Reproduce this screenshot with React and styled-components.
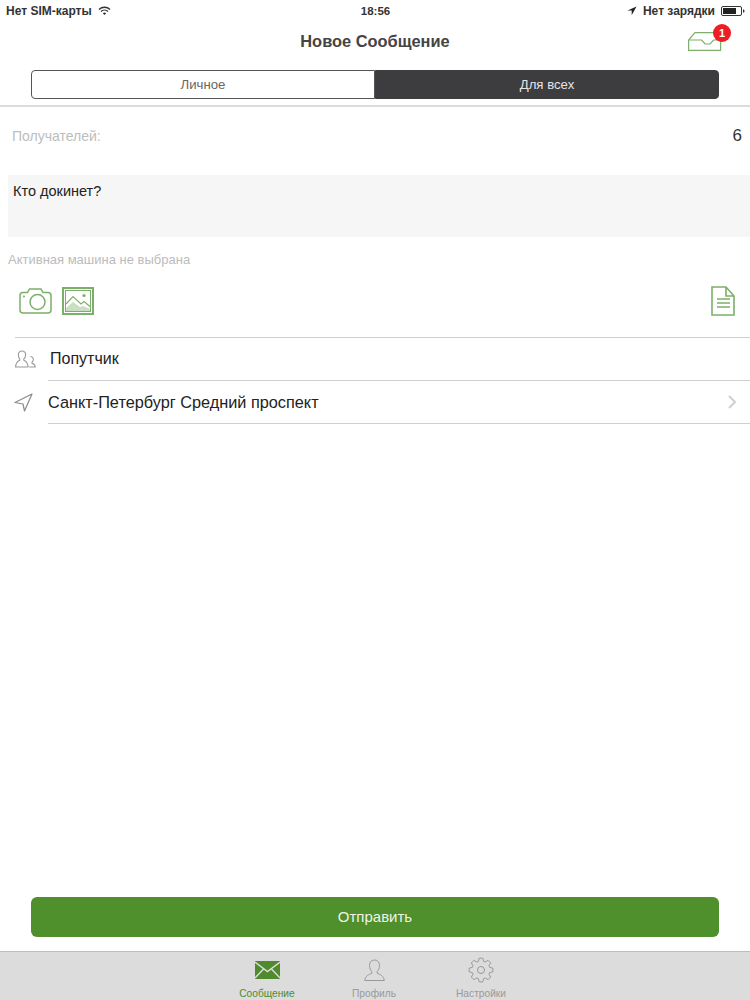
import styled, { createGlobalStyle } from "styled-components";

const Global = createGlobalStyle`
  html, body {
    margin: 0;
    padding: 0;
    background: #ffffff;
  }
  body {
    font-family: "Liberation Sans", Arial, sans-serif;
  }
`;

const Page = styled.div`
  width: 750px;
  height: 1000px;
  display: flex;
  flex-direction: column;
  overflow: hidden;
  background: #fff;
`;

const StatusBar = styled.div`
  height: 21px;
  padding: 0 5px 0 6px;
  display: grid;
  grid-template-columns: 1fr auto 1fr;
  align-items: center;
  font-size: 12px;
  font-weight: 700;
  color: #333;
`;

const StatusSide = styled.div`
  display: flex;
  align-items: center;
  gap: 6px;
  justify-content: ${(p) => (p.$right ? "flex-end" : "flex-start")};
`;

const Clock = styled.span`
  font-size: 11.5px;
`;

const Header = styled.div`
  position: relative;
  height: 42px;
  box-sizing: border-box;
  padding-bottom: 2px;
  display: flex;
  align-items: center;
  justify-content: center;
  font-size: 16.4px;
  font-weight: 700;
  color: #444;
`;

const InboxWrap = styled.div`
  position: absolute;
  left: 688px;
  top: 3px;
  width: 44px;
  height: 30px;
`;

const Badge = styled.div`
  position: absolute;
  left: 25px;
  top: 0;
  width: 18px;
  height: 18px;
  border-radius: 50%;
  background: #ee1c25;
  color: #fff;
  font-size: 11px;
  font-weight: 700;
  line-height: 18px;
  text-align: center;
`;

const Segments = styled.div`
  margin: 7px 31px 0;
  height: 29px;
  display: flex;
`;

const Segment = styled.div`
  flex: 1;
  display: flex;
  align-items: center;
  justify-content: center;
  box-sizing: border-box;
  font-size: 13.2px;
  color: ${(p) => (p.$active ? "#e4e4e4" : "#666")};
  background: ${(p) => (p.$active ? "#3d3c3e" : "#fff")};
  border: 1px solid ${(p) => (p.$active ? "#3d3c3e" : "#555")};
  border-radius: ${(p) => (p.$active ? "0 4px 4px 0" : "4px 0 0 4px")};
`;

const Rule = styled.div`
  height: 2px;
  margin-top: 6px;
  background: #dcdcdc;
`;

const Recipients = styled.div`
  height: 57px;
  padding: 0 8px 0 12px;
  display: flex;
  align-items: center;
  justify-content: space-between;
`;

const RecipientsLabel = styled.span`
  font-size: 14px;
  color: #bdbdbd;
`;

const RecipientsCount = styled.span`
  font-size: 17px;
  color: #333;
`;

const Message = styled.div`
  margin: 11px 0 0 8px;
  height: 62px;
  padding: 8px 5px;
  box-sizing: border-box;
  background: #f6f6f6;
  font-size: 14.5px;
  color: #222;
`;

const CarNote = styled.div`
  margin: 15px 0 0 8px;
  font-size: 13px;
  line-height: 15px;
  color: #bcbcbc;
`;

const Attachments = styled.div`
  height: 70px;
  box-sizing: border-box;
  padding: 0 15px 3px 19px;
  display: flex;
  align-items: center;
  gap: 10px;
`;

const Spacer = styled.div`
  flex: 1;
`;

const Row = styled.div`
  position: relative;
  height: ${(p) => (p.$last ? 44 : 43)}px;
  box-sizing: border-box;
  margin-left: ${(p) => p.$inset}px;
  padding-left: ${(p) => p.$pad}px;
  padding-right: 13px;
  display: flex;
  align-items: center;
  justify-content: space-between;
  border-top: 1px solid #cfcfcf;
  border-bottom: ${(p) => (p.$last ? "1px solid #cfcfcf" : "none")};
  font-size: ${(p) => p.$size}px;
  color: #222;
`;

const RowIcon = styled.div`
  position: absolute;
  left: ${(p) => p.$left}px;
  top: 12px;
  display: flex;
`;

const Main = styled.div`
  flex: 1;
  display: flex;
  flex-direction: column;
`;

const SendButton = styled.button`
  margin: 0 31px 14px;
  height: 40px;
  padding: 0 0 2px;
  border: none;
  border-radius: 6px;
  background: #4f8f2c;
  color: #eef4ea;
  font-family: inherit;
  font-size: 15px;
`;

const TabBar = styled.div`
  height: 49px;
  box-sizing: border-box;
  padding-right: 2px;
  border-top: 1px solid #bdbdbd;
  background: #dcdcdc;
  display: flex;
  justify-content: center;
  gap: 50px;
`;

const Tab = styled.div`
  width: 57px;
  display: flex;
  flex-direction: column;
  align-items: center;
  height: 48px;
  font-size: 10.2px;
  color: ${(p) => (p.$active ? "#4f8a2e" : "#9a9a9a")};
`;

const TabIcon = styled.div`
  height: 36px;
  display: flex;
  align-items: center;
`;

const TabLabel = styled.span`
  line-height: 12px;
  white-space: nowrap;
`;

const green = "#7cb06a";

const Wifi = () => (
  <svg width="13" height="10" viewBox="0 0 13 10">
    <path d="M1 3.5a8 8 0 0 1 11 0" fill="none" stroke="#333" strokeWidth="1.4" />
    <path d="M3 5.6a5 5 0 0 1 7 0" fill="none" stroke="#333" strokeWidth="1.4" />
    <path d="M4.8 7.2a2.5 2.5 0 0 1 3.4 0L6.5 9z" fill="#333" />
  </svg>
);

const Arrow = () => (
  <svg width="10" height="10" viewBox="0 0 10 10">
    <path d="M9.5.5 .5 4.6h4.2V9.2z" fill="#222" />
  </svg>
);

const Battery = () => (
  <svg width="24" height="10" viewBox="0 0 24 10">
    <rect x=".5" y=".5" width="20" height="9" rx="1.5" fill="none" stroke="#333" />
    <rect x="2" y="2" width="13" height="6" fill="#222" />
    <path d="M22 3.4c1 0 1.5.7 1.5 1.6s-.5 1.600-1.500 1.600z" fill="#333" />
  </svg>
);

const Inbox = () => (
  <svg width="34" height="19" viewBox="0 0 34 19" style={{ position: "absolute", left: 0, top: 8 }}>
    <path
      d="M.6 8 7 .6h26M.6 8v10.400h32V8M.6 8h13l3.500 4h5l3.500-4h7"
      fill="none"
      stroke={green}
      strokeWidth="1.2"
    />
  </svg>
);

const Camera = () => (
  <svg width="33" height="26" viewBox="0 0 33 26">
    <path
      d="M3.500 4.500h5l2-3.500h11.500l2 3.500h5a3 3 0 0 1 3 3V22a3 3 0 0 1-3 3H4a3 3 0 0 1-3-3V7a2.800 2.800 0 0 1 2.500-2.500z"
      fill="none"
      stroke={green}
      strokeWidth="1.5"
    />
    <circle cx="18.500" cy="14" r="7.500" fill="none" stroke={green} strokeWidth="1.5" />
    <circle cx="5" cy="8.500" r="1" fill={green} />
  </svg>
);

const Picture = () => (
  <svg width="32" height="28" viewBox="0 0 32 28">
    <rect x="1" y="1" width="30" height="26" fill="none" stroke={green} strokeWidth="2" />
    <rect x="3.500" y="3.500" width="25" height="21" fill="none" stroke={green} strokeWidth="1" />
    <path d="M4 17 11 9.500 19 17l3-2.500 6 5" fill="none" stroke={green} strokeWidth="1.100" />
    <path d="M4 24v-3l7-6 7 5 3-1 7 3v2z" fill="#c9dfc0" />
    <circle cx="22" cy="8.500" r="1.600" fill={green} />
  </svg>
);

const DocIcon = () => (
  <svg width="24" height="30" viewBox="0 0 24 30">
    <path d="M1 1h14l8 9v19H1zM15 1v9h8" fill="none" stroke={green} strokeWidth="1.600" />
    <path d="M6 13h13M6 17h13M6 21h13" stroke={green} strokeWidth="1.300" />
  </svg>
);

const People = () => (
  <svg width="21" height="18" viewBox="0 0 21 18">
    <g fill="none" stroke="#9a9a9a" strokeWidth="1.100">
      <path d="M7 1a3.600 3.600 0 0 1 3.600 4c0 1.800-.8 3.200-1.800 3.900v1.300c2.200.9 4 2.200 4.200 6.800H.6c.2-4.600 2-5.900 4.200-6.800V8.900C3.800 8.200 3.400 6.800 3.400 5A3.600 3.600 0 0 1 7 1z" />
      <path d="M15.500 6.500a2.800 2.800 0 0 1 2.800 3c0 1.300-.5 2.200-1.300 2.800v1c1.800.5 3 1.400 3.200 3.700h-6" />
    </g>
  </svg>
);

const Navigate = () => (
  <svg width="19" height="19" viewBox="0 0 19 19">
    <path d="M18 1 1 9.500l8 1.500 1.500 7z" fill="none" stroke="#8a8a8a" strokeWidth="1.200" strokeLinejoin="round" />
  </svg>
);

const Chevron = () => (
  <svg width="9" height="14" viewBox="0 0 9 14">
    <path d="M1 1l6 6-6 6" fill="none" stroke="#cfcfcf" strokeWidth="2" />
  </svg>
);

const Envelope = () => (
  <svg width="25" height="18" viewBox="0 0 25 18">
    <rect width="25" height="18" fill="#4f8a2e" />
    <path d="M0 1l12.500 9.500L25 1M0 17l8.500-9M25 17l-8.500-9" fill="none" stroke="#dcdcdc" strokeWidth="1.400" />
  </svg>
);

const Profile = () => (
  <svg width="21" height="22" viewBox="0 0 21 22">
    <path
      d="M10.500 1c3.300 0 5 2.300 5 5.500 0 2.800-.9 4.600-2.300 6v1.800c2.800 1.200 6.500 2.300 7.100 7.200H.7c.6-4.900 4.300-6 7.100-7.200v-1.800C6.400 11.100 5.500 9.300 5.500 6.500 5.500 3.300 7.200 1 10.500 1z"
      fill="none"
      stroke="#999"
      strokeWidth="1"
    />
  </svg>
);

// contour of the settings gear, 8 teeth
const gearPath = () => {
  const points = [];
  for (let i = 0; i < 8; i++) {
    const a = (i * Math.PI) / 4;
    [
      [-0.3, 9],
      [-0.15, 12],
      [0.15, 12],
      [0.3, 9],
    ].forEach(([d, r]) => {
      points.push(`${(13 + r * Math.sin(a + d)).toFixed(2)} ${(13 - r * Math.cos(a + d)).toFixed(2)}`);
    });
  }
  return `M${points.join("L")}Z`;
};

const Gear = () => (
  <svg width="26" height="26" viewBox="0 0 26 26">
    <g fill="none" stroke="#999" strokeWidth="1" strokeLinejoin="round">
      <circle cx="13" cy="13" r="3.500" />
      <path d={gearPath()} />
    </g>
  </svg>
);

export default function App() {
  return (
    <Page>
      <Global />
      <StatusBar>
        <StatusSide>
          Нет SIM-карты <Wifi />
        </StatusSide>
        <Clock>18:56</Clock>
        <StatusSide $right>
          <Arrow /> Нет зарядки <Battery />
        </StatusSide>
      </StatusBar>
      <Header>
        Новое Сообщение
        <InboxWrap>
          <Inbox />
          <Badge>1</Badge>
        </InboxWrap>
      </Header>
      <Segments>
        <Segment>Личное</Segment>
        <Segment $active>Для всех</Segment>
      </Segments>
      <Rule />
      <Main>
        <Recipients>
          <RecipientsLabel>Получателей:</RecipientsLabel>
          <RecipientsCount>6</RecipientsCount>
        </Recipients>
        <Message>Кто докинет?</Message>
        <CarNote>Активная машина не выбрана</CarNote>
        <Attachments>
          <Camera />
          <Picture />
          <Spacer />
          <DocIcon />
        </Attachments>
        <Row $inset={15} $pad={35} $size={16}>
          <RowIcon $left={0}>
            <People />
          </RowIcon>
          Попутчик
        </Row>
        <Row $inset={48} $pad={0} $size={16.3} $last>
          <RowIcon $left={-34}>
            <Navigate />
          </RowIcon>
          Санкт-Петербург Средний проспект
          <Chevron />
        </Row>
      </Main>
      <SendButton>Отправить</SendButton>
      <TabBar>
        <Tab $active>
          <TabIcon>
            <Envelope />
          </TabIcon>
          <TabLabel>Сообщение</TabLabel>
        </Tab>
        <Tab>
          <TabIcon>
            <Profile />
          </TabIcon>
          <TabLabel>Профиль</TabLabel>
        </Tab>
        <Tab>
          <TabIcon>
            <Gear />
          </TabIcon>
          <TabLabel>Настройки</TabLabel>
        </Tab>
      </TabBar>
    </Page>
  );
}
